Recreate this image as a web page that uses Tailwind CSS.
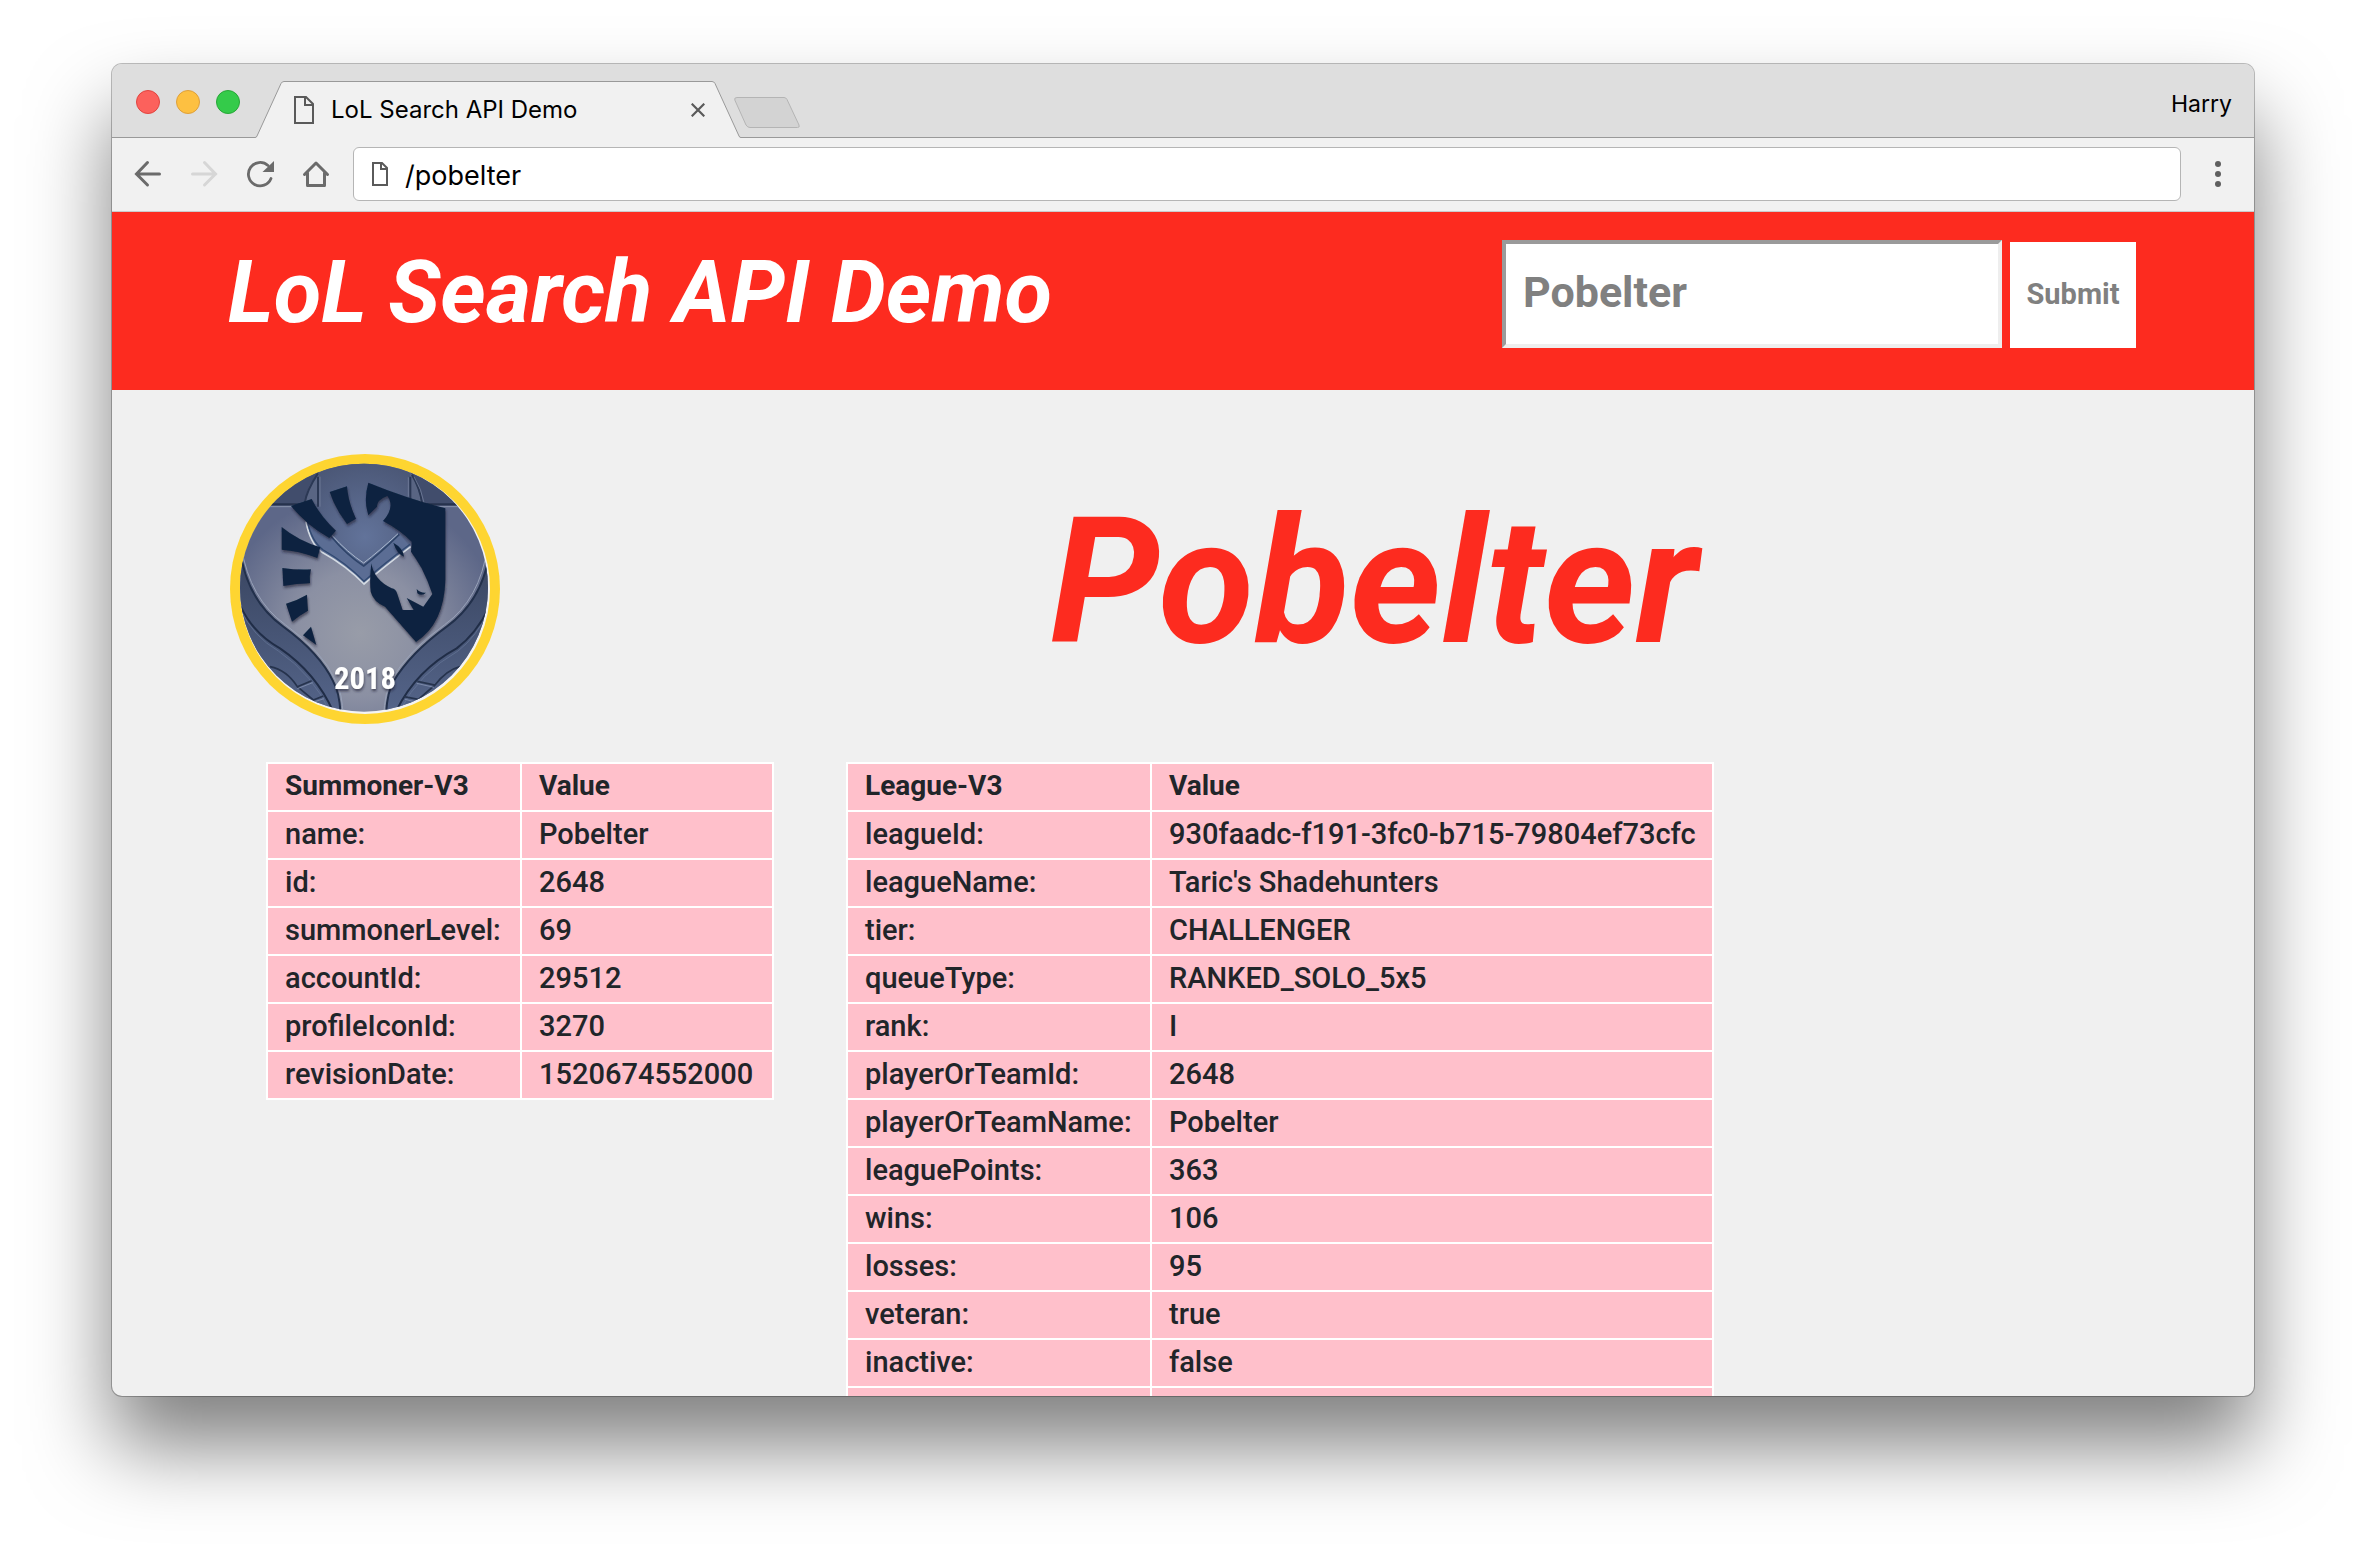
<!DOCTYPE html>
<html lang="en">
<head>
<meta charset="utf-8">
<title>LoL Search API Demo</title>
<script src="https://cdn.jsdelivr.net/npm/@tailwindcss/browser@4"></script>
</head>
<body class="flex h-screen flex-col overflow-hidden bg-white px-[112px] pt-16 pb-[160px] font-['Roboto',sans-serif]">

<div class="flex min-h-0 flex-1 flex-col overflow-hidden rounded-[10px] bg-[#f0f0f0] shadow-[0_0_0_1px_rgba(0,0,0,0.25),0_50px_82px_rgba(0,0,0,0.5)]">

  <!-- Tab strip -->
  <div class="flex h-[74px] shrink-0 border-b border-[#999999] bg-[#dedede] pr-[22px] pl-6 font-['Inter',sans-serif] text-black">
    <div class="flex gap-4 pt-[26px]">
      <button aria-label="Close window" class="size-6 rounded-full border border-[#e2443f] bg-[#fc615c]"></button>
      <button aria-label="Minimize window" class="size-6 rounded-full border border-[#dfa03a] bg-[#fdc041]"></button>
      <button aria-label="Zoom window" class="size-6 rounded-full border border-[#27a737] bg-[#34cb4a]"></button>
    </div>
    <div class="relative mt-[17px] ml-[15px] flex h-[57px] w-[486px] items-center pr-9 pl-[39px]">
      <svg class="absolute inset-0" width="486" height="57" viewBox="0 0 486 57" aria-hidden="true">
        <path d="M0 57V56.500Q1.500 56.500 2 55L26 2.500Q27 .500 29 .500H457Q459 .500 460 2.500L484 55Q484.500 56.500 486 56.500V57Z" fill="#f1f1f1"/>
        <path d="M0 56.500Q1.500 56.500 2 55L26 2.500Q27 .500 29 .500H457Q459 .500 460 2.500L484 55Q484.500 56.500 486 56.500" fill="none" stroke="#999"/>
      </svg>
      <svg class="relative" width="20" height="28" viewBox="0 0 20 28" fill="none" stroke="#5a5a5a" stroke-width="2" aria-hidden="true"><path d="M1 1H12L19 8V27H1ZM11 1V9H19"/></svg>
      <span class="relative ml-[17px] flex-1 text-[24px] leading-8 whitespace-nowrap">LoL Search API Demo</span>
      <button aria-label="Close tab" class="relative"><svg width="14" height="14" viewBox="0 0 14 14" stroke="#5a5a5a" stroke-width="2.200"><path d="M.700 .700L13.300 13.300M13.300 .700L.700 13.300"/></svg></button>
    </div>
    <button aria-label="New tab" class="-ml-[7px] mt-[33px] h-8 w-[66px]"><svg width="66" height="32" viewBox="0 0 66 32"><path d="M3 .500H50Q52 .500 53 2.500L65 28Q66 30.500 63.500 30.500H16Q13.500 30.500 12 28L.800 3Q0 .500 3 .500Z" fill="#d3d3d3" stroke="#b4b4b4"/></svg></button>
    <button class="ml-auto self-start text-[23px] leading-[80px]">Harry</button>
  </div>

  <!-- Toolbar -->
  <div class="flex h-[74px] shrink-0 items-center border-b border-[#cbcbcb] bg-[#f1f1f1] pb-[2px] pl-2">
    <button aria-label="Back" class="flex h-12 w-14 items-center justify-center"><svg width="28" height="28" viewBox="0 0 28 28" fill="none" stroke="#6b6b6b" stroke-width="3" stroke-linecap="round"><path d="M13.500 2.500L2.500 14L13.500 25M2.500 14H25.500"/></svg></button>
    <button aria-label="Forward" class="flex h-12 w-14 items-center justify-center"><svg width="28" height="28" viewBox="0 0 28 28" fill="none" stroke="#d6d6d6" stroke-width="3" stroke-linecap="round"><path d="M14.500 2.500L25.500 14L14.500 25M25.500 14H2.500"/></svg></button>
    <button aria-label="Reload" class="flex h-12 w-14 items-center justify-center"><svg width="28" height="28" viewBox="0 0 28 28" fill="none"><path d="M22 5.500A11.700 11.700 0 1 0 25 18.500" stroke="#6b6b6b" stroke-width="2.800" stroke-linecap="round"/><path d="M28 1V12H16.500Z" fill="#6b6b6b"/></svg></button>
    <button aria-label="Home" class="flex h-12 w-14 items-center justify-center"><svg width="28" height="28" viewBox="0 0 28 28" fill="none" stroke="#6b6b6b" stroke-width="3" stroke-linecap="round" stroke-linejoin="round"><path d="M2.500 14.500L14 3L25.500 14.500"/><path d="M5.500 13V25.500H22.500V13"/></svg></button>
    <label class="ml-[9px] flex h-[54px] flex-1 items-center rounded-[6px] border border-[#b5b5b5] bg-white pl-[18px]">
      <svg width="16" height="24" viewBox="0 0 16 24" fill="none" stroke="#5a5a5a" stroke-width="2" aria-hidden="true"><path d="M1 1H10L15 6V23H1ZM9 1V7H15"/></svg>
      <input aria-label="Address" value="/pobelter" class="ml-[17px] h-12 min-w-0 flex-1 bg-transparent pt-[3px] font-['Inter',sans-serif] text-[27px] text-black outline-none">
    </label>
    <button aria-label="Menu" class="flex h-12 w-[73px] items-center justify-center"><svg width="6" height="26" viewBox="0 0 6 26" fill="#5f5f5f"><circle cx="3" cy="3" r="3"/><circle cx="3" cy="13" r="3"/><circle cx="3" cy="23" r="3"/></svg></button>
  </div>

  <!-- Site header -->
  <header class="flex shrink-0 items-start justify-between bg-[#fd2b1f] pt-7 pr-[118px] pb-[42px] pl-[116px]">
    <h1 class="text-[87px] leading-[104px] font-bold whitespace-nowrap text-white italic">LoL Search API Demo</h1>
    <form class="flex items-end gap-2">
      <input aria-label="Summoner name" placeholder="Pobelter" class="h-[108px] w-[500px] border-4 border-t-[#9a9a9a] border-r-[#eeeeee] border-b-[#eeeeee] border-l-[#9a9a9a] bg-white px-[17px] pb-1 text-[43px] font-bold outline-none placeholder:text-[#808080]">
      <button type="submit" class="h-[106px] w-[126px] bg-white text-[29px] font-bold text-[#808080]">Submit</button>
    </form>
  </header>

  <!-- Summoner profile -->
  <main class="min-h-0 flex-1 overflow-hidden px-[118px] pt-16 text-[#212529]">
    <div class="flex h-[308px] items-start">
      <div class="w-[382px] shrink-0">
        <svg width="270" height="270" viewBox="60 42 810 810" role="img" aria-label="Profile icon">
          <defs>
            <radialGradient id="silver" gradientUnits="userSpaceOnUse" cx="450" cy="580" r="420">
              <stop offset="0" stop-color="#989ca8"/><stop offset=".45" stop-color="#8b90a3"/><stop offset="1" stop-color="#5d6788"/>
            </radialGradient>
            <radialGradient id="dome" gradientUnits="userSpaceOnUse" cx="465" cy="290" r="240">
              <stop offset="0" stop-color="#62739a"/><stop offset="1" stop-color="#4a5675"/>
            </radialGradient>
            <linearGradient id="strap" x1="0" y1="0" x2="0" y2="1"><stop offset="0" stop-color="#38445f"/><stop offset="1" stop-color="#55658a"/></linearGradient>
            <clipPath id="disc"><circle cx="462" cy="443" r="372"/></clipPath>
            <filter id="soft" x="-10%" y="-10%" width="120%" height="120%"><feDropShadow dx="2" dy="7" stdDeviation="3" flood-color="#1b2233" flood-opacity=".6"/></filter>
          </defs>
          <circle cx="465" cy="447" r="405" fill="#fed531"/>
          <circle cx="465" cy="447" r="375" fill="#f4f4f4"/>
          <g clip-path="url(#disc)">
            <rect x="80" y="60" width="770" height="770" fill="url(#silver)"/>
            <path d="M80 192H285Q290 130 330 96V60H80Z M850 192H640Q630 130 600 96V60H850Z" fill="#414d6c"/>
            <path d="M80 193H285M640 193H850" stroke="#26324c" stroke-width="7"/>
            <path d="M80 200H285M640 200H850" stroke="#8993ad" stroke-width="3"/>
            <path d="M330 96Q270 170 292 262Q300 310 335 335Q400 375 462 432Q520 380 600 320L640 250Q650 150 597 96Q560 60 460 60Q370 60 330 96Z" fill="url(#dome)"/>
            <path d="M325 100Q288 145 285 192H328ZM600 100Q628 145 635 192H598Z" fill="#596583"/>
            <path d="M324 100Q290 150 284 190M324 110V200M601 110V185M606 104Q630 145 636 188" fill="none" stroke="#2b3854" stroke-width="6"/>
            <path d="M330 110V200M595 112V170M612 110Q636 150 642 188" fill="none" stroke="#7c88a4" stroke-width="2"/>
            <path d="M292 250Q300 310 340 335Q410 375 462 428Q520 380 600 320L568 280Q510 325 461 376Q410 325 362 285Z" fill="#5b6d94"/>
            <path d="M288 245Q300 310 335 336Q410 378 462 432Q520 382 602 320" fill="none" stroke="#d3dae2" stroke-width="5"/>
            <path d="M292 243Q305 305 340 330Q410 370 462 424Q518 374 600 313" fill="none" stroke="#314a72" stroke-width="4"/>
            <path d="M362 288Q410 345 461 378Q510 340 568 283" fill="none" stroke="#2f4469" stroke-width="5"/>
            <path d="M366 286Q412 337 461 369Q508 333 564 281" fill="none" stroke="#aab8cc" stroke-width="3"/>
            <path d="M90 330Q110 480 220 560Q330 640 370 725Q390 760 392 830H60V330Z M840 330Q820 480 710 560Q600 640 550 725Q530 760 528 830H860V330Z" fill="url(#strap)"/>
            <path d="M90 330Q110 480 220 560Q330 640 370 725Q390 760 392 830M840 330Q820 480 710 560Q600 640 550 725Q530 760 528 830" fill="none" stroke="#22304b" stroke-width="6"/>
            <path d="M94 322Q120 478 226 554Q338 634 377 722Q398 760 399 830M832 322Q810 478 704 554Q592 634 543 722Q524 760 521 830" fill="none" stroke="#98a2b8" stroke-width="3"/>
            <path d="M92 500Q130 580 210 625Q320 700 372 820M838 500Q800 580 740 625Q620 690 560 810" fill="none" stroke="#202d47" stroke-width="6"/>
            <path d="M92 510Q130 590 205 633Q310 705 362 820M838 510Q800 590 744 633Q630 698 570 810" fill="none" stroke="#68789a" stroke-width="2"/>
            <path d="M180 680Q230 690 262 740L305 722M262 740L310 780L340 768M750 680Q710 690 675 735L622 724M675 735L625 778L582 770" fill="none" stroke="#26334d" stroke-width="5"/>
            <path d="M262 746L308 728M305 788L342 776M672 742L620 730M618 786L585 778" fill="none" stroke="#7b89a8" stroke-width="3"/>
            <g fill="#0b223f" filter="url(#soft)">
              <path d="M359 156L411 139Q414 185 438 236L411 252Q375 205 359 156Z"/>
              <path d="M243 198L305 177Q332 230 378 272L358 294Q290 256 243 198Z"/>
              <path d="M215 261Q265 302 331 322L322 354Q265 332 215 329Z"/>
              <path d="M217 384Q260 390 303 388Q297 410 300 430Q260 431 220 438Z"/>
              <path d="M228 491Q260 482 291 464Q292 490 294 512Q270 525 246 545Z"/>
              <path d="M279 586L303 560L319 615Z"/>
              <path d="M475 128Q590 175 706 205V420Q703 550 618 606L525 500Q490 485 482 455Q478 420 484 370Q492 420 545 445Q558 447 562 462L578 510H611L590 474L640 500L667 462Q655 425 635 385Q618 355 603 335L605 305Q570 270 519 243Q545 215 541 188Q539 175 532 168Q500 180 501 200L475 226Q460 180 475 128Z"/>
              <path d="M550 308Q580 325 582 350Q560 340 550 308ZM620 447Q632 460 648 458Q635 470 622 460Z"/>
            </g>
            <text x="465" y="748" text-anchor="middle" fill="#fff" class="font-['Roboto_Condensed','Liberation_Sans_Narrow','Roboto',sans-serif] text-[92px] font-bold" filter="url(#soft)">2018</text>
          </g>
        </svg>
      </div>
      <h2 class="flex-1 text-center text-[175px] leading-[258px] font-bold text-[#fd2b1f] italic">Pobelter</h2>
    </div>

    <div class="flex items-start gap-[72px] pl-9 text-[29px] leading-[30px] font-medium">
      <table id="summoner" class="w-[508px] shrink-0 table-fixed border-collapse bg-[#ffc0cb]">
        <colgroup><col class="w-[254px]"><col></colgroup>
        <thead></thead><tbody></tbody>
      </table>
      <table id="league" class="w-[868px] shrink-0 table-fixed border-collapse bg-[#ffc0cb]">
        <colgroup><col class="w-[304px]"><col></colgroup>
        <thead></thead><tbody></tbody>
      </table>
    </div>
  </main>
</div>

<script>
  const cell = 'border-2 border-white pt-[7px] pb-[9px] px-[17px] text-left whitespace-nowrap';
  const fill = (id, head, rows) => {
    const table = document.getElementById(id);
    table.tHead.innerHTML = '<tr>' + head.map(h => `<th scope="col" class="${cell} text-[28px] leading-[30px] font-bold">${h}</th>`).join('') + '</tr>';
    table.tBodies[0].innerHTML = rows.map(([k, v]) => `<tr><td class="${cell}">${k}</td><td class="${cell}">${v}</td></tr>`).join('');
  };
  fill('summoner', ['Summoner-V3', 'Value'], [
    ['name:', 'Pobelter'], ['id:', '2648'], ['summonerLevel:', '69'], ['accountId:', '29512'],
    ['profileIconId:', '3270'], ['revisionDate:', '1520674552000'],
  ]);
  fill('league', ['League-V3', 'Value'], [
    ['leagueId:', '930faadc-f191-3fc0-b715-79804ef73cfc'], ['leagueName:', "Taric's Shadehunters"],
    ['tier:', 'CHALLENGER'], ['queueType:', 'RANKED_SOLO_5x5'], ['rank:', 'I'], ['playerOrTeamId:', '2648'],
    ['playerOrTeamName:', 'Pobelter'], ['leaguePoints:', '363'], ['wins:', '106'], ['losses:', '95'],
    ['veteran:', 'true'], ['inactive:', 'false'], ['&nbsp;', '&nbsp;'],
  ]);
</script>
</body>
</html>
